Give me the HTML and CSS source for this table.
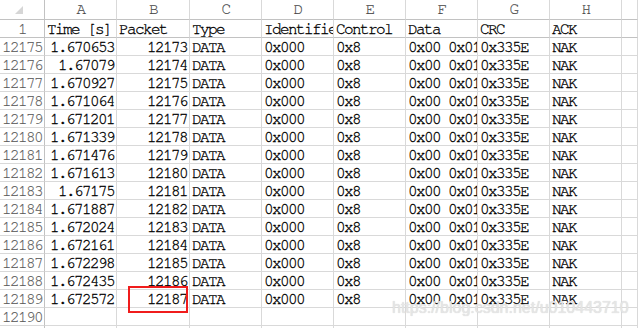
FILE: index.html
```html
<!DOCTYPE html>
<html>
<head>
<meta charset="utf-8">
<link rel="stylesheet" href="styles.css">
</head>
<body>
<div class="sheet">
  <div class="grid">
    <div class="cell corner"><svg width="8" height="8" viewBox="0 0 8 8"><polygon points="8,0 8,8 0,8" fill="#d6d6d6"/></svg></div>
    <div class="cell ch">A</div><div class="cell ch">B</div><div class="cell ch">C</div><div class="cell ch">D</div><div class="cell ch">E</div><div class="cell ch">F</div><div class="cell ch">G</div><div class="cell ch">H</div><div class="cell ch"></div>

    <div class="cell rh fr">1</div><div class="cell fr">Time [s]</div><div class="cell fr">Packet</div><div class="cell fr">Type</div><div class="cell fr">Identifier</div><div class="cell fr">Control</div><div class="cell fr">Data</div><div class="cell fr">CRC</div><div class="cell fr">ACK</div><div class="cell fr"></div>

    <div class="cell rh">12175</div><div class="cell num">1.670653</div><div class="cell num">12173</div><div class="cell">DATA</div><div class="cell">0x000</div><div class="cell">0x8</div><div class="cell">0x00 0x01 0x02 0x03</div><div class="cell">0x335E</div><div class="cell">NAK</div><div class="cell"></div>
    <div class="cell rh">12176</div><div class="cell num">1.67079</div><div class="cell num">12174</div><div class="cell">DATA</div><div class="cell">0x000</div><div class="cell">0x8</div><div class="cell">0x00 0x01 0x02 0x03</div><div class="cell">0x335E</div><div class="cell">NAK</div><div class="cell"></div>
    <div class="cell rh">12177</div><div class="cell num">1.670927</div><div class="cell num">12175</div><div class="cell">DATA</div><div class="cell">0x000</div><div class="cell">0x8</div><div class="cell">0x00 0x01 0x02 0x03</div><div class="cell">0x335E</div><div class="cell">NAK</div><div class="cell"></div>
    <div class="cell rh">12178</div><div class="cell num">1.671064</div><div class="cell num">12176</div><div class="cell">DATA</div><div class="cell">0x000</div><div class="cell">0x8</div><div class="cell">0x00 0x01 0x02 0x03</div><div class="cell">0x335E</div><div class="cell">NAK</div><div class="cell"></div>
    <div class="cell rh">12179</div><div class="cell num">1.671201</div><div class="cell num">12177</div><div class="cell">DATA</div><div class="cell">0x000</div><div class="cell">0x8</div><div class="cell">0x00 0x01 0x02 0x03</div><div class="cell">0x335E</div><div class="cell">NAK</div><div class="cell"></div>
    <div class="cell rh">12180</div><div class="cell num">1.671339</div><div class="cell num">12178</div><div class="cell">DATA</div><div class="cell">0x000</div><div class="cell">0x8</div><div class="cell">0x00 0x01 0x02 0x03</div><div class="cell">0x335E</div><div class="cell">NAK</div><div class="cell"></div>
    <div class="cell rh">12181</div><div class="cell num">1.671476</div><div class="cell num">12179</div><div class="cell">DATA</div><div class="cell">0x000</div><div class="cell">0x8</div><div class="cell">0x00 0x01 0x02 0x03</div><div class="cell">0x335E</div><div class="cell">NAK</div><div class="cell"></div>
    <div class="cell rh">12182</div><div class="cell num">1.671613</div><div class="cell num">12180</div><div class="cell">DATA</div><div class="cell">0x000</div><div class="cell">0x8</div><div class="cell">0x00 0x01 0x02 0x03</div><div class="cell">0x335E</div><div class="cell">NAK</div><div class="cell"></div>
    <div class="cell rh">12183</div><div class="cell num">1.67175</div><div class="cell num">12181</div><div class="cell">DATA</div><div class="cell">0x000</div><div class="cell">0x8</div><div class="cell">0x00 0x01 0x02 0x03</div><div class="cell">0x335E</div><div class="cell">NAK</div><div class="cell"></div>
    <div class="cell rh">12184</div><div class="cell num">1.671887</div><div class="cell num">12182</div><div class="cell">DATA</div><div class="cell">0x000</div><div class="cell">0x8</div><div class="cell">0x00 0x01 0x02 0x03</div><div class="cell">0x335E</div><div class="cell">NAK</div><div class="cell"></div>
    <div class="cell rh">12185</div><div class="cell num">1.672024</div><div class="cell num">12183</div><div class="cell">DATA</div><div class="cell">0x000</div><div class="cell">0x8</div><div class="cell">0x00 0x01 0x02 0x03</div><div class="cell">0x335E</div><div class="cell">NAK</div><div class="cell"></div>
    <div class="cell rh">12186</div><div class="cell num">1.672161</div><div class="cell num">12184</div><div class="cell">DATA</div><div class="cell">0x000</div><div class="cell">0x8</div><div class="cell">0x00 0x01 0x02 0x03</div><div class="cell">0x335E</div><div class="cell">NAK</div><div class="cell"></div>
    <div class="cell rh">12187</div><div class="cell num">1.672298</div><div class="cell num">12185</div><div class="cell">DATA</div><div class="cell">0x000</div><div class="cell">0x8</div><div class="cell">0x00 0x01 0x02 0x03</div><div class="cell">0x335E</div><div class="cell">NAK</div><div class="cell"></div>
    <div class="cell rh">12188</div><div class="cell num">1.672435</div><div class="cell num">12186</div><div class="cell">DATA</div><div class="cell">0x000</div><div class="cell">0x8</div><div class="cell">0x00 0x01 0x02 0x03</div><div class="cell">0x335E</div><div class="cell">NAK</div><div class="cell"></div>
    <div class="cell rh">12189</div><div class="cell num">1.672572</div><div class="cell num">12187</div><div class="cell">DATA</div><div class="cell">0x000</div><div class="cell">0x8</div><div class="cell">0x00 0x01 0x02 0x03</div><div class="cell">0x335E</div><div class="cell">NAK</div><div class="cell"></div>
    <div class="cell rh">12190</div><div class="cell"></div><div class="cell"></div><div class="cell"></div><div class="cell"></div><div class="cell"></div><div class="cell"></div><div class="cell"></div><div class="cell"></div><div class="cell"></div>
    <div class="cell rh"></div><div class="cell"></div><div class="cell"></div><div class="cell"></div><div class="cell"></div><div class="cell"></div><div class="cell"></div><div class="cell"></div><div class="cell"></div><div class="cell"></div>
  </div>
  <div class="highlight"></div>
  <div class="watermark">https://blog.csdn.net/u010443710</div>
</div>
</body>
</html>
```

FILE: styles.css
```css
html, body {
  margin: 0;
  padding: 0;
  background: #ffffff;
  overflow: hidden;
}

.sheet {
  position: relative;
  width: 638px;
  height: 328px;
  overflow: hidden;
}

.grid {
  display: grid;
  grid-template-columns: 45px 72px 73px repeat(6, 72px) 1fr;
  grid-template-rows: 20px;
  grid-auto-rows: 18px;
  font-family: "Nimbus Mono PS", "FreeMono", "Courier 10 Pitch", "Liberation Mono", "DejaVu Sans Mono", monospace;
  font-size: 16px;
  letter-spacing: -1.6px;
  -webkit-text-stroke: 0.3px currentColor;
  color: #000;
}

.cell {
  box-sizing: border-box;
  border-right: 1px solid #d9d9d9;
  border-bottom: 1px solid #d9d9d9;
  white-space: nowrap;
  overflow: hidden;
  padding: 0 2px;
  line-height: 19px;
}

.corner {
  display: flex;
  padding: 6px 0 0 15px;
  border-bottom-color: #c2c2c2;
  border-right-color: #c2c2c2;
}

.corner svg {
  display: block;
}

.ch {
  text-align: center;
  color: #444;
  line-height: 19px;
  -webkit-text-stroke: 0.15px currentColor;
  border-bottom-color: #c2c2c2;
}

.rh {
  text-align: center;
  color: #5a5a5a;
  padding: 0;
  -webkit-text-stroke: 0.15px currentColor;
  border-right-color: #c2c2c2;
}

.fr {
  border-bottom-color: #c2c2c2;
}

.num {
  text-align: right;
}

.highlight {
  position: absolute;
  left: 128px;
  top: 286px;
  width: 60px;
  height: 27px;
  box-sizing: border-box;
  border: 2px solid #f01c1c;
}

.watermark {
  position: absolute;
  left: 392px;
  top: 299px;
  font-family: "Liberation Sans", Arial, sans-serif;
  font-size: 16px;
  line-height: 18px;
  color: #e6e6e6;
  text-shadow: 0 0 1px #cfcfcf;
}
```
